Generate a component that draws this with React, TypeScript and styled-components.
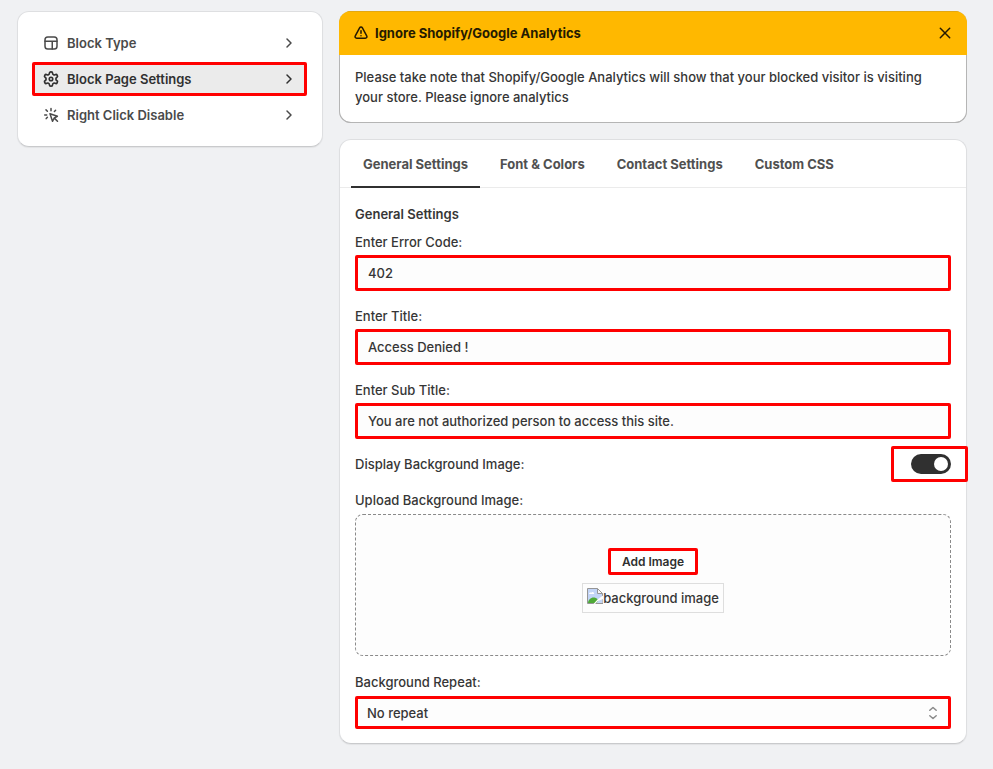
import React, { useState } from "react";
import styled, { createGlobalStyle, css } from "styled-components";

const GlobalStyle = createGlobalStyle`
  *, *::before, *::after { box-sizing: border-box; }
  body {
    margin: 0;
    background: #f0f1f3;
    color: #363636;
    font: 450 13px/20px Inter, "Liberation Sans", sans-serif;
  }
  button, input, select { font: inherit; color: inherit; margin: 0; }
`;

const marked = css`
  border: 3px solid #ff0000;
  border-radius: 2px;
`;

const Page = styled.div`
  display: grid;
  grid-template-columns: minmax(220px, 306px) minmax(0, 1fr);
  gap: 16px;
  align-items: start;
  padding: 11px 26px 24px 17px;
`;

const Card = styled.section`
  background: #ffffff;
  border: 1px solid #dedfe1;
  border-bottom-color: #c9cacc;
  border-radius: 12px;
  box-shadow: 0 1px 1px rgba(0, 0, 0, 0.06);
`;

const Nav = styled(Card).attrs({ as: "nav" })`
  display: flex;
  flex-direction: column;
  gap: 2px;
  padding: 14px 15px 14px 14px;
`;

const NavItem = styled.button<{ $active?: boolean }>`
  display: flex;
  align-items: center;
  gap: 6px;
  height: 34px;
  padding: 0 5px 0 6px;
  border: 3px solid transparent;
  background: transparent;
  color: #4a4a4a;
  font-weight: 620;
  text-align: left;
  cursor: pointer;
  ${(p) => p.$active && css`
    ${marked}
    background: #ebebeb;
    color: #303030;
  `}
`;

const NavText = styled.span`
  flex: 1;
`;

const Main = styled.main`
  display: flex;
  flex-direction: column;
  gap: 16px;
`;

const Banner = styled.section`
  overflow: hidden;
  background: #ffffff;
  border-radius: 12px;
  box-shadow: inset 0 0 0 1px #b5b5b5, inset 0 -1px 0 #a8a8a8;
`;

const BannerHead = styled.header`
  display: flex;
  align-items: center;
  gap: 4px;
  height: 44px;
  padding: 0 12px;
  background: #ffb800;
  box-shadow: inset 0 1px 0 #e3a812;
  color: #251a00;
`;

const BannerTitle = styled.h2`
  flex: 1;
  margin: 0;
  font-size: 13px;
  font-weight: 650;
`;

const IconButton = styled.button`
  display: flex;
  padding: 0;
  border: 0;
  background: none;
  cursor: pointer;
`;

const BannerText = styled.p`
  margin: 0;
  padding: 12px 16px 16px;
`;

const Tabs = styled.div`
  display: flex;
  gap: 8px;
  padding: 0 11px;
  border-bottom: 1px solid #ebebeb;
`;

const Tab = styled.button<{ $active?: boolean }>`
  height: 48px;
  margin-bottom: -1px;
  padding: 2px 12px 0;
  border: 0;
  border-bottom: 2px solid ${(p) => (p.$active ? "#303030" : "transparent")};
  background: none;
  color: #505050;
  font-weight: 650;
  cursor: pointer;
`;

const Panel = styled.div`
  display: flex;
  flex-direction: column;
  gap: 16px;
  padding: 16px 15px 14px;
`;

const Heading = styled.h3`
  margin: 0 0 -8px;
  font-size: 13px;
  line-height: 20px;
  font-weight: 640;
`;

const Field = styled.div`
  display: flex;
  flex-direction: column;
  gap: 4px;
`;

const Input = styled.input`
  ${marked}
  width: 100%;
  height: 36px;
  && { margin: -1px 0; }
  padding: 0 10px;
  background: #fdfdfd;
  outline: none;
`;

const SwitchRow = styled.div`
  display: flex;
  align-items: center;
  justify-content: space-between;
`;

const SwitchWrap = styled.span`
  position: relative;
  display: flex;
  &::after {
    content: "";
    position: absolute;
    inset: -8px -17px -8px -20px;
    pointer-events: none;
    ${marked}
  }
`;

const Switch = styled.input`
  appearance: none;
  display: flex;
  align-items: center;
  width: 40px;
  height: 20px;
  padding: 0 3px;
  border-radius: 10px;
  background: #8a8a8a;
  cursor: pointer;
  &::before {
    content: "";
    width: 14px;
    height: 14px;
    border-radius: 50%;
    background: #ffffff;
  }
  &:checked {
    justify-content: flex-end;
    background: #303030;
  }
`;

const DropZone = styled.div`
  display: flex;
  flex-direction: column;
  align-items: center;
  gap: 8px;
  padding: 33px 16px 42px;
  border: 1px dashed #8a8a8a;
  border-radius: 8px;
  background: #fdfdfd;
`;

const AddButton = styled.button`
  ${marked}
  height: 27px;
  padding: 0 11px;
  background: #ffffff;
  color: #303030;
  font-size: 12px;
  line-height: 16px;
  font-weight: 590;
  cursor: pointer;
`;

const MissingImage = styled.div`
  display: flex;
  padding: 4px;
  border: 1px solid #dedede;
`;

const SelectWrap = styled.div`
  position: relative;
`;

const Select = styled.select`
  ${marked}
  appearance: none;
  display: block;
  width: 100%;
  height: 33px;
  padding: 0 32px 0 9px;
  background: #fdfdfd;
  outline: none;
`;

const SelectArrows = styled.span`
  position: absolute;
  top: 0;
  bottom: 0;
  right: 8px;
  display: flex;
  align-items: center;
  color: #8a8a8a;
  pointer-events: none;
`;

function Icon({ children, width = 1.5 }: { children: React.ReactNode; width?: number }) {
  return (
    <svg width="20" height="20" viewBox="0 0 20 20" fill="none" stroke="currentColor"
      strokeWidth={width} strokeLinecap="round" strokeLinejoin="round" aria-hidden="true">
      {children}
    </svg>
  );
}

const LayoutIcon = () => (
  <Icon>
    <rect x="4" y="4" width="12" height="12" rx="2.75" />
    <path d="M4 8.25h12M11.25 8.25V16" />
  </Icon>
);

const GearIcon = () => (
  <Icon>
    <g transform="translate(1.36 1.36) scale(.72)" strokeWidth="2.3">
      <path d="M12.22 2h-.44a2 2 0 0 0-2 2v.18a2 2 0 0 1-1 1.73l-.43.25a2 2 0 0 1-2 0l-.15-.08a2 2 0 0 0-2.73.73l-.22.38a2 2 0 0 0 .73 2.73l.15.1a2 2 0 0 1 1 1.72v.51a2 2 0 0 1-1 1.74l-.15.09a2 2 0 0 0-.73 2.73l.22.38a2 2 0 0 0 2.73.73l.15-.08a2 2 0 0 1 2 0l.43.25a2 2 0 0 1 1 1.73V20a2 2 0 0 0 2 2h.44a2 2 0 0 0 2-2v-.18a2 2 0 0 1 1-1.73l.43-.25a2 2 0 0 1 2 0l.15.08a2 2 0 0 0 2.73-.73l.22-.39a2 2 0 0 0-.73-2.73l-.15-.08a2 2 0 0 1-1-1.74v-.5a2 2 0 0 1 1-1.74l.15-.09a2 2 0 0 0 .73-2.73l-.22-.38a2 2 0 0 0-2.73-.73l-.15.08a2 2 0 0 1-2 0l-.43-.25a2 2 0 0 1-1-1.73V4a2 2 0 0 0-2-2z" />
      <circle cx="12" cy="12" r="2.4" />
    </g>
  </Icon>
);

const ClickIcon = () => (
  <Icon>
    <path d="M9 8.8l7.4 2.5-3.2 1.7-1.7 3.3zM13.3 13.1l3.2 3.2M10 3.6v2.2M5 4.9l1.4 1.4M14.6 5.2l-1.2 1.3M3.7 10h2M5.2 13.6l1.2-1.3" />
  </Icon>
);

const ChevronIcon = () => (
  <Icon>
    <path d="M8 6l4 4-4 4" />
  </Icon>
);

const WarningIcon = () => (
  <Icon>
    <path d="M8.6 4.9a1.6 1.6 0 0 1 2.8 0l4.3 7.9c.7 1.3 0 2.4-1.4 2.4H5.7c-1.4 0-2.1-1.1-1.4-2.4z" />
    <path d="M10 7.7v2.6M10 12.7v.1" />
  </Icon>
);

const CloseIcon = () => (
  <Icon>
    <path d="M5.3 5.3l9.4 9.4M14.7 5.3l-9.4 9.4" />
  </Icon>
);

const ArrowsIcon = () => (
  <Icon>
    <path d="M6.8 7.3L10 4.5l3.2 2.8M6.8 12.7l3.2 2.8 3.2-2.8" />
  </Icon>
);

const BrokenImageIcon = () => (
  <svg width="16" height="16" viewBox="0 0 16 16" aria-hidden="true">
    <path d="M.5 .5h10l5 5v10H.5z" fill="#c3d5f7" />
    <path d="M2 6c0-1.400 1.400-2 2.300-1.300C5 3.300 7.300 3.800 7.200 6z" fill="#fff" />
    <path d="M1 15c0-3 3-6 6.500-5.500 2 .3 3.500 2 4 3L9.500 15z" fill="#4eaa37" />
    <path d="M10.500 .5v5h5z" fill="#f7f7f7" />
    <path d="M16 10.500V15.500H.5V.5h10l5 5V9M10.500 .5v5h5" fill="none" stroke="#969696" />
    <path d="M16 7.500v3.500l-5 2-3 3H6.500l4-4.500z" fill="#fdfdfd" />
  </svg>
);

const navItems = [
  { name: "Block Type", icon: <LayoutIcon /> },
  { name: "Block Page Settings", icon: <GearIcon /> },
  { name: "Right Click Disable", icon: <ClickIcon /> },
];

const tabs = ["General Settings", "Font & Colors", "Contact Settings", "Custom CSS"];

const fields = [
  { id: "error-code", label: "Enter Error Code:", value: "402" },
  { id: "title", label: "Enter Title:", value: "Access Denied !" },
  { id: "sub-title", label: "Enter Sub Title:", value: "You are not authorized person to access this site." },
];

export default function App() {
  const [page, setPage] = useState("Block Page Settings");
  const [tab, setTab] = useState("General Settings");
  const [bannerOpen, setBannerOpen] = useState(true);

  return (
    <>
      <GlobalStyle />
      <Page>
        <Nav>
          {navItems.map((item) => (
            <NavItem key={item.name} type="button" $active={item.name === page} onClick={() => setPage(item.name)}>
              {item.icon}
              <NavText>{item.name}</NavText>
              <ChevronIcon />
            </NavItem>
          ))}
        </Nav>
        <Main>
          {bannerOpen && (
            <Banner>
              <BannerHead>
                <WarningIcon />
                <BannerTitle>Ignore Shopify/Google Analytics</BannerTitle>
                <IconButton type="button" aria-label="Dismiss" onClick={() => setBannerOpen(false)}>
                  <CloseIcon />
                </IconButton>
              </BannerHead>
              <BannerText>
                Please take note that Shopify/Google Analytics will show that your blocked visitor is visiting your
                store. Please ignore analytics
              </BannerText>
            </Banner>
          )}
          <Card>
            <Tabs role="tablist">
              {tabs.map((name) => (
                <Tab key={name} type="button" role="tab" aria-selected={name === tab} $active={name === tab}
                  onClick={() => setTab(name)}>
                  {name}
                </Tab>
              ))}
            </Tabs>
            <Panel>
              <Heading>General Settings</Heading>
              {fields.map((f) => (
                <Field key={f.id}>
                  <label htmlFor={f.id}>{f.label}</label>
                  <Input id={f.id} type="text" defaultValue={f.value} />
                </Field>
              ))}
              <SwitchRow>
                <label htmlFor="show-image">Display Background Image:</label>
                <SwitchWrap>
                  <Switch id="show-image" type="checkbox" role="switch" defaultChecked />
                </SwitchWrap>
              </SwitchRow>
              <Field>
                <span>Upload Background Image:</span>
                <DropZone>
                  <AddButton type="button">Add Image</AddButton>
                  <MissingImage>
                    <BrokenImageIcon />
                    <span>background image</span>
                  </MissingImage>
                </DropZone>
              </Field>
              <Field>
                <label htmlFor="repeat">Background Repeat:</label>
                <SelectWrap>
                  <Select id="repeat" defaultValue="No repeat">
                    <option>No repeat</option>
                    <option>Repeat</option>
                  </Select>
                  <SelectArrows>
                    <ArrowsIcon />
                  </SelectArrows>
                </SelectWrap>
              </Field>
            </Panel>
          </Card>
        </Main>
      </Page>
    </>
  );
}
